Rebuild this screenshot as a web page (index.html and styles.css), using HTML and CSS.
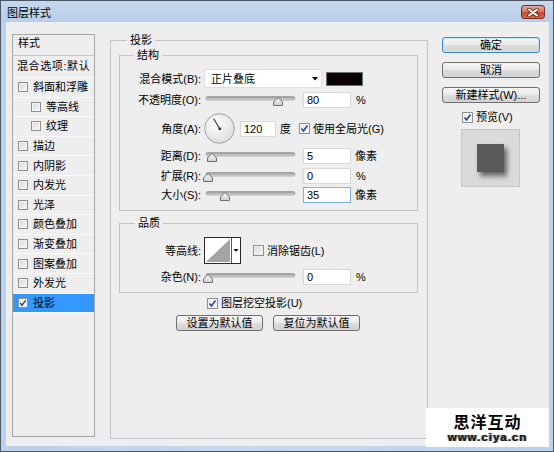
FILE: index.html
```html
<!DOCTYPE html>
<html lang="zh-CN">
<head>
<meta charset="utf-8">
<title>图层样式</title>
<link rel="stylesheet" href="styles.css">
</head>
<body>
<svg class="defs" width="0" height="0" aria-hidden="true">
  <defs>
    <linearGradient id="trk" x1="0" y1="0" x2="0" y2="1">
      <stop offset="0" stop-color="#8a8a8a"/>
      <stop offset="1" stop-color="#e4e4e4"/>
    </linearGradient>
    <linearGradient id="thm" x1="0" y1="0" x2="0" y2="1">
      <stop offset="0" stop-color="#ffffff"/>
      <stop offset="1" stop-color="#cdcdcd"/>
    </linearGradient>
    <radialGradient id="dialg" cx="0.4" cy="0.35" r="0.75">
      <stop offset="0" stop-color="#ffffff"/>
      <stop offset="1" stop-color="#d9d9d9"/>
    </radialGradient>
  </defs>
</svg>
<div class="window">
  <div class="titlebar">
    <span class="title">图层样式</span>
    <span class="close">
      <svg width="12" height="9" viewBox="0 0 12 9">
        <path d="M2 1.5 L10 7.5 M10 1.5 L2 7.5" stroke="#6b2419" stroke-width="3.6" stroke-linecap="round"/>
        <path d="M2 1.5 L10 7.5 M10 1.5 L2 7.5" stroke="#ffffff" stroke-width="2" stroke-linecap="round"/>
      </svg>
    </span>
  </div>
  <div class="client">
    <div class="styles-list">
      <div class="list-head">样式</div>
      <div class="list-blend">混合选项:默认</div>
      <div class="list-row"><span class="cb small"></span><span>斜面和浮雕</span></div>
      <div class="list-row sub"><span class="cb small"></span><span>等高线</span></div>
      <div class="list-row sub"><span class="cb small"></span><span>纹理</span></div>
      <div class="list-row"><span class="cb small"></span><span>描边</span></div>
      <div class="list-row"><span class="cb small"></span><span>内阴影</span></div>
      <div class="list-row"><span class="cb small"></span><span>内发光</span></div>
      <div class="list-row"><span class="cb small"></span><span>光泽</span></div>
      <div class="list-row"><span class="cb small"></span><span>颜色叠加</span></div>
      <div class="list-row"><span class="cb small"></span><span>渐变叠加</span></div>
      <div class="list-row"><span class="cb small"></span><span>图案叠加</span></div>
      <div class="list-row"><span class="cb small"></span><span>外发光</span></div>
      <div class="list-row selected"><span class="cb small on"><svg width="8" height="8" viewBox="0 0 8 8"><path d="M1.2 4 L3 6.3 L6.8 1.2" stroke="#22418a" stroke-width="1.4" fill="none"/></svg></span><span>投影</span></div>
    </div>

    <fieldset class="group main">
      <legend>投影</legend>
      <fieldset class="group inner structure">
        <legend>结构</legend>
        <div class="row r-blend">
          <span class="lbl">混合模式(B):</span>
          <div class="select"><span>正片叠底</span><svg width="6" height="4" viewBox="0 0 6 4"><path d="M0 0 H6 L3 3.5 Z" fill="#000"/></svg></div>
          <span class="swatch"></span>
        </div>
        <div class="row r-opacity">
          <span class="lbl">不透明度(O):</span>
          <svg class="slider" width="96" height="16" viewBox="0 0 96 16"><rect x="6" y="4.5" width="89" height="3.5" rx="1.75" fill="url(#trk)" stroke="#a0a0a0" stroke-width="0.8"/><path d="M73.5 13.5 V10 L78 5.5 L82.5 10 V13.5 Z" fill="url(#thm)" stroke="#6e6e6e"/></svg>
          <span class="num">80</span>
          <span class="unit">%</span>
        </div>
        <div class="row r-angle">
          <span class="lbl">角度(A):</span>
          <svg class="dial" width="31" height="31" viewBox="0 0 31 31"><circle cx="15.5" cy="15.5" r="14.8" fill="url(#dialg)" stroke="#a2a2a2"/><path d="M15.8 15.8 L9.6 5.6" stroke="#3a3a3a" stroke-width="1.1"/><circle cx="15.8" cy="15.8" r="1.4" fill="#222"/></svg>
          <span class="num short">120</span>
          <span class="deg">度</span>
          <span class="cb on gl"><svg width="9" height="9" viewBox="0 0 9 9"><path d="M1.5 4.5 L3.5 7 L7.5 1.5" stroke="#22418a" stroke-width="1.5" fill="none"/></svg></span>
          <span class="cbtext">使用全局光(G)</span>
        </div>
        <div class="row r-dist">
          <span class="lbl">距离(D):</span>
          <svg class="slider" width="96" height="16" viewBox="0 0 96 16"><rect x="6" y="4.5" width="89" height="3.5" rx="1.75" fill="url(#trk)" stroke="#a0a0a0" stroke-width="0.8"/><path d="M7.5 13.5 V10 L12 5.5 L16.5 10 V13.5 Z" fill="url(#thm)" stroke="#6e6e6e"/></svg>
          <span class="num">5</span>
          <span class="unit px">像素</span>
        </div>
        <div class="row r-spread">
          <span class="lbl">扩展(R):</span>
          <svg class="slider" width="96" height="16" viewBox="0 0 96 16"><rect x="6" y="4.5" width="89" height="3.5" rx="1.75" fill="url(#trk)" stroke="#a0a0a0" stroke-width="0.8"/><path d="M3.5 13.5 V10 L8 5.5 L12.5 10 V13.5 Z" fill="url(#thm)" stroke="#6e6e6e"/></svg>
          <span class="num">0</span>
          <span class="unit">%</span>
        </div>
        <div class="row r-size">
          <span class="lbl">大小(S):</span>
          <svg class="slider" width="96" height="16" viewBox="0 0 96 16"><rect x="6" y="4.5" width="89" height="3.5" rx="1.75" fill="url(#trk)" stroke="#a0a0a0" stroke-width="0.8"/><path d="M20.5 13.5 V10 L25 5.5 L29.5 10 V13.5 Z" fill="url(#thm)" stroke="#6e6e6e"/></svg>
          <span class="num focus">35</span>
          <span class="unit px">像素</span>
        </div>
      </fieldset>

      <fieldset class="group inner quality">
        <legend>品质</legend>
        <div class="row r-contour">
          <span class="lbl">等高线:</span>
          <svg class="contour" width="37" height="27" viewBox="0 0 37 27"><rect x="0.5" y="0.5" width="36" height="26" fill="#fff" stroke="#2a2a2a"/><polygon points="2,25 26,2 26,25" fill="#a4a4a4"/><line x1="27.5" y1="1" x2="27.5" y2="26" stroke="#5a5a5a"/><polygon points="29.5,12 34.5,12 32,14.8" fill="#000"/></svg>
          <span class="cb aa"></span>
          <span class="cbtext">消除锯齿(L)</span>
        </div>
        <div class="row r-noise">
          <span class="lbl">杂色(N):</span>
          <svg class="slider" width="96" height="16" viewBox="0 0 96 16"><rect x="6" y="4.5" width="89" height="3.5" rx="1.75" fill="url(#trk)" stroke="#a0a0a0" stroke-width="0.8"/><path d="M3.5 13.5 V10 L8 5.5 L12.5 10 V13.5 Z" fill="url(#thm)" stroke="#6e6e6e"/></svg>
          <span class="num">0</span>
          <span class="unit">%</span>
        </div>
      </fieldset>

      <div class="row r-knock">
        <span class="cb on"><svg width="9" height="9" viewBox="0 0 9 9"><path d="M1.5 4.5 L3.5 7 L7.5 1.5" stroke="#22418a" stroke-width="1.5" fill="none"/></svg></span>
        <span class="cbtext">图层挖空投影(U)</span>
      </div>
      <div class="row r-defaults">
        <span class="btn wide">设置为默认值</span>
        <span class="btn wide">复位为默认值</span>
      </div>
    </fieldset>

    <div class="actions">
      <span class="btn default">确定</span>
      <span class="btn">取消</span>
      <span class="btn">新建样式(W)...</span>
      <div class="row r-preview">
        <span class="cb on"><svg width="9" height="9" viewBox="0 0 9 9"><path d="M1.5 4.5 L3.5 7 L7.5 1.5" stroke="#22418a" stroke-width="1.5" fill="none"/></svg></span>
        <span class="cbtext">预览(V)</span>
      </div>
      <div class="preview"><div class="preview-square"></div></div>
    </div>
  </div>
  <div class="watermark">
    <span class="wm-cn">思洋互动</span>
    <span class="wm-url">www.ciya.cn</span>
  </div>
</div>
</body>
</html>
```
FILE: styles.css
```css
* { box-sizing: border-box; }
html, body { margin: 0; padding: 0; }
body {
  width: 554px;
  height: 452px;
  overflow: hidden;
  background: #ffffff;
  font-family: "Liberation Sans", "Noto Sans CJK SC", sans-serif;
  font-size: 11px;
  line-height: 14px;
  color: #000;
}
.defs { display: block; width: 0; height: 0; overflow: hidden; }

.window {
  position: relative;
  width: 554px;
  height: 452px;
  border: 1px solid #4b5767;
  background: linear-gradient(90deg, #bcd1ea, #c6d8ee 50%, #bcd1ea);
  display: flex;
  flex-direction: column;
}

.titlebar {
  height: 21px;
  flex: none;
  display: flex;
  justify-content: space-between;
  align-items: flex-start;
  padding: 0 8px 0 6px;
  background: linear-gradient(#c6d8ee, #b8cee8);
}
.title { margin-top: 5px; }
.close {
  margin-top: 4px;
  width: 24px;
  height: 14px;
  border: 1px solid #7b2e24;
  border-radius: 3px;
  background: linear-gradient(#e6a797 0%, #d97a66 45%, #c5462f 55%, #d06a52 100%);
  display: flex;
  align-items: center;
  justify-content: center;
}
.close svg { display: block; }

.client {
  height: 424px;
  flex: none;
  margin: 0 4px 0 5px;
  background: #eeeeee;
  display: flex;
  align-items: flex-start;
  padding: 11px 0 0 6px;
}

/* left styles list */
.styles-list {
  flex: none;
  width: 83px;
  height: 403px;
  margin-top: 1px;
  border: 1px solid #a4a4a4;
  background: #eeeeee;
  overflow: hidden;
}
.list-head {
  height: 21px;
  padding: 1px 0 0 5px;
  border-bottom: 1px solid #c4c4c4;
}
.list-blend {
  height: 22px;
  padding: 3px 0 0 4px;
  white-space: nowrap;
  letter-spacing: 0.6px;
  overflow: hidden;
  border-bottom: 1px solid #fbfbfb;
}
.list-row {
  height: 19.6px;
  display: flex;
  align-items: center;
  gap: 5px;
  padding-left: 5px;
  border-bottom: 1px solid #fbfbfb;
  white-space: nowrap;
}
.list-row.sub { padding-left: 18px; }
.list-row.selected { background: #3399ff; }

/* checkboxes */
.cb {
  flex: none;
  width: 11px;
  height: 11px;
  border: 1px solid #8e8f8f;
  background: linear-gradient(135deg, #d6d6d6, #f9f9f9);
  box-shadow: inset 0 0 0 1px #f3f3f3;
  display: flex;
  align-items: center;
  justify-content: center;
}
.cb.small { width: 10px; height: 10px; }
.cb.on { background: linear-gradient(135deg, #e8e8e8, #ffffff); }
.cb svg { display: block; }
.cbtext { margin-left: 3px; white-space: nowrap; }

/* group boxes */
.group {
  margin: 0;
  padding: 0;
  min-width: 0;
  border: 1px solid #c4c4c4;
}
.group > legend { padding: 0 3px; line-height: 14px; }
.main {
  flex: none;
  width: 318px;
  height: 406px;
  margin-left: 15px;
}
.main > legend { margin-left: 16px; }
.inner { margin: 1px 9px 0 8px; padding: 0 0 7px 0; }
.structure > legend { margin-left: 14px; }
.quality { margin-top: 5px; }
.quality > legend { margin-left: 15px; }

.row { display: flex; align-items: center; }
.lbl {
  flex: none;
  width: 81px;
  margin-right: 3px;
  text-align: right;
  white-space: nowrap;
}
.r-blend { height: 19px; margin-top: 7px; }
.r-opacity { height: 16px; margin-top: 4px; }
.r-angle { height: 31px; margin-top: 5px; }
.r-dist { height: 16px; margin-top: 4px; }
.r-spread { height: 16px; margin-top: 4px; }
.r-size { height: 16px; margin-top: 3px; }
.r-contour { height: 27px; margin-top: 7px; }
.r-noise { height: 16px; margin-top: 5px; }

.select {
  flex: none;
  width: 118px;
  height: 19px;
  background: #ffffff;
  border: 1px solid #dedede;
  display: flex;
  align-items: center;
  justify-content: space-between;
  padding: 0 3px 0 6px;
}
.select svg { display: block; }
.swatch {
  flex: none;
  width: 37px;
  height: 14px;
  margin-left: 4px;
  background: #0b0202;
  border: 1px solid #707070;
}

.slider { display: block; flex: none; margin-left: -4px; }
.dial { display: block; flex: none; }
.contour { display: block; flex: none; }

.num {
  flex: none;
  width: 48px;
  height: 16px;
  margin-left: 7px;
  padding-left: 3px;
  background: #ffffff;
  border: 1px solid #d8d8d8;
  line-height: 14px;
}
.num.short { width: 36px; margin-left: 5px; }
.num.focus { border-color: #7db2e8; }
.unit { margin-left: 5px; }
.unit.px { margin-left: 4px; }
.deg { margin-left: 4px; }
.cb.gl { margin-left: 8px; }
.cb.aa { margin-left: 12px; }

.r-knock { height: 14px; margin-top: 3px; padding-left: 96px; }
.r-defaults { margin-top: 5px; padding-left: 65px; gap: 10px; }

/* buttons */
.btn {
  flex: none;
  height: 16px;
  border: 1px solid #707070;
  border-radius: 3px;
  background: linear-gradient(#f5f5f5, #ebebeb 48%, #dcdcdc 52%, #d3d3d3);
  display: flex;
  align-items: center;
  justify-content: center;
  line-height: 14px;
  white-space: nowrap;
}
.btn.wide { width: 87px; }
.btn.default {
  border-color: #3c88cc;
  box-shadow: inset 0 0 0 1px #c6e6f8;
}

.actions {
  flex: none;
  width: 98px;
  margin-left: 14px;
  margin-top: 4px;
  display: flex;
  flex-direction: column;
}
.actions .btn + .btn { margin-top: 9px; }
.r-preview { height: 12px; margin-top: 8px; padding-left: 20px; }
.preview {
  width: 59px;
  height: 58px;
  margin: 6px 0 0 19px;
  background: #dadada;
  border: 1px solid #c6c6c6;
  display: flex;
  align-items: center;
  justify-content: center;
}
.preview-square {
  width: 27px;
  height: 28px;
  background: #595959;
  box-shadow: 3px 4px 5px rgba(0, 0, 0, 0.55);
}

/* watermark overlay */
.watermark {
  position: absolute;
  left: 425px;
  top: 407px;
  width: 123px;
  height: 39px;
  background: #ffffff;
  display: flex;
  flex-direction: column;
  align-items: center;
  padding-top: 5px;
  overflow: hidden;
}
.wm-cn {
  font-family: "Noto Sans CJK SC", sans-serif;
  font-weight: 700;
  font-size: 16px;
  line-height: 17px;
  letter-spacing: 1px;
}
.wm-url {
  margin-top: 2px;
  font-family: "Liberation Sans", sans-serif;
  font-weight: 700;
  font-size: 11.5px;
  line-height: 11px;
  letter-spacing: 1px;
  color: #111;
  text-shadow: 0 0 1px #888, 1px 0 0 #999, -1px 0 0 #bbb;
}
```
